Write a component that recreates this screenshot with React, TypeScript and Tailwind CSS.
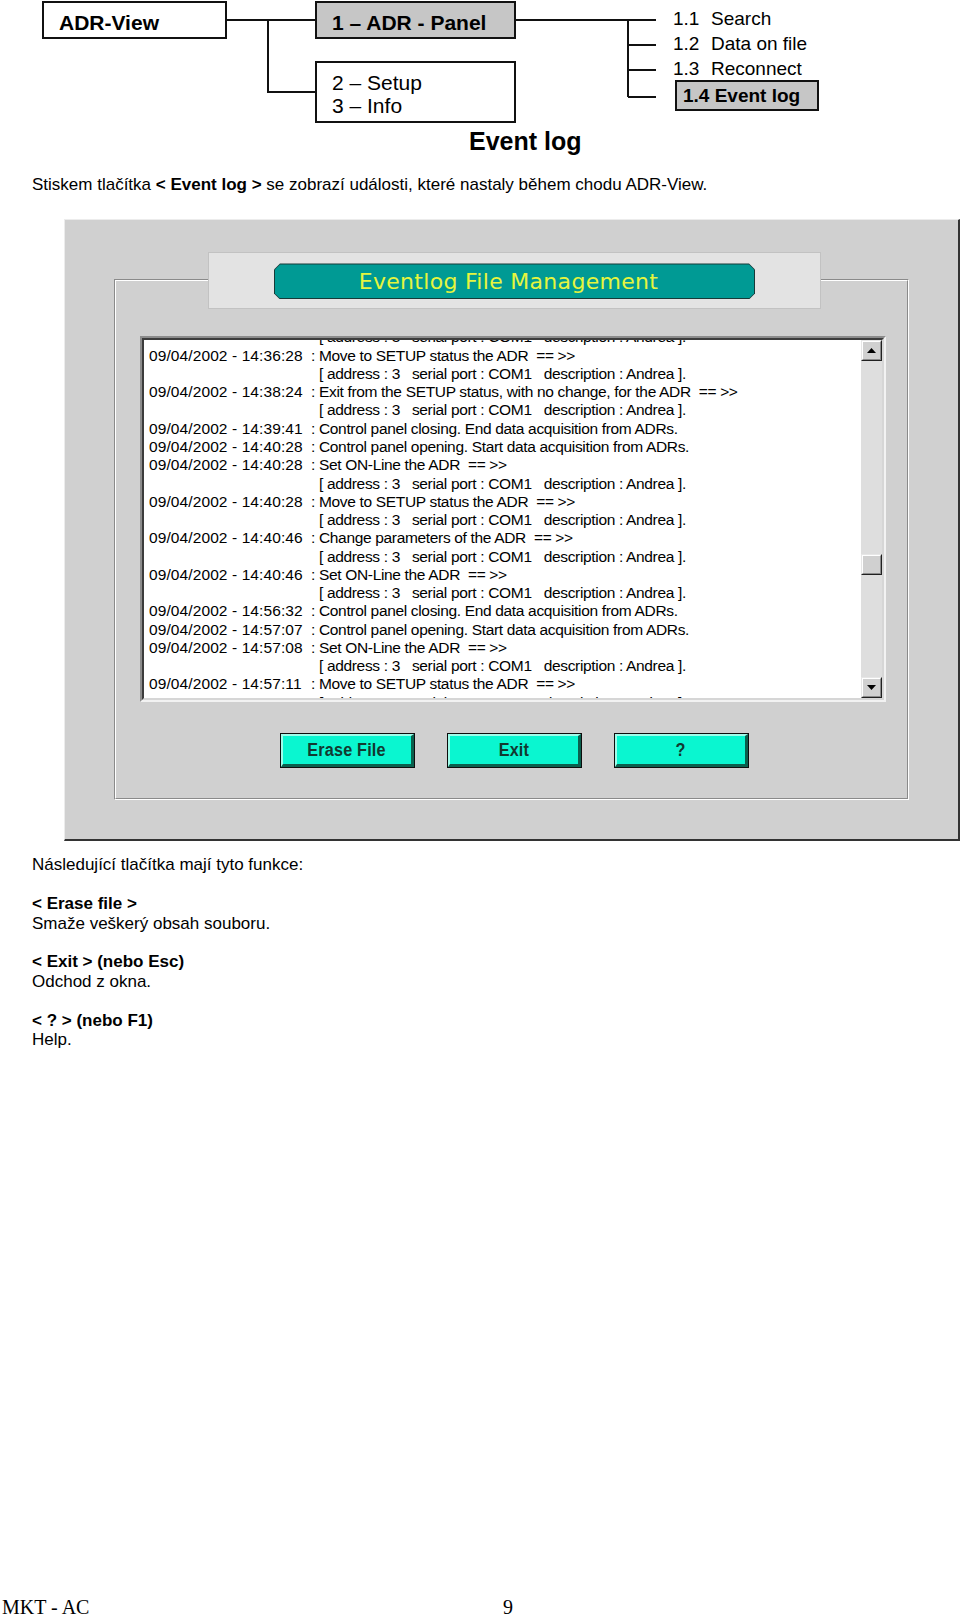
import React from 'react';

const ADDR = '[ address : 3   serial port : COM1   description : Andrea ].';

const rows: [string, string][] = [
  ['', ADDR],
  ['09/04/2002 - 14:36:28', 'Move to SETUP status the ADR  == >>'],
  ['', ADDR],
  ['09/04/2002 - 14:38:24', 'Exit from the SETUP status, with no change, for the ADR  == >>'],
  ['', ADDR],
  ['09/04/2002 - 14:39:41', 'Control panel closing. End data acquisition from ADRs.'],
  ['09/04/2002 - 14:40:28', 'Control panel opening. Start data acquisition from ADRs.'],
  ['09/04/2002 - 14:40:28', 'Set ON-Line the ADR  == >>'],
  ['', ADDR],
  ['09/04/2002 - 14:40:28', 'Move to SETUP status the ADR  == >>'],
  ['', ADDR],
  ['09/04/2002 - 14:40:46', 'Change parameters of the ADR  == >>'],
  ['', ADDR],
  ['09/04/2002 - 14:40:46', 'Set ON-Line the ADR  == >>'],
  ['', ADDR],
  ['09/04/2002 - 14:56:32', 'Control panel closing. End data acquisition from ADRs.'],
  ['09/04/2002 - 14:57:07', 'Control panel opening. Start data acquisition from ADRs.'],
  ['09/04/2002 - 14:57:08', 'Set ON-Line the ADR  == >>'],
  ['', ADDR],
  ['09/04/2002 - 14:57:11', 'Move to SETUP status the ADR  == >>'],
  ['', ADDR],
];

function RaisedBox({ children, className = '' }: { children?: React.ReactNode; className?: string }) {
  return (
    <div className={`border border-t-[#e6e6e6] border-l-[#e6e6e6] border-r-[#202020] border-b-[#202020] bg-[#d0d0d0] ${className}`}>
      <div className="w-full h-full border border-t-white border-l-white border-r-[#8a8a8a] border-b-[#8a8a8a] flex items-center justify-center">
        {children}
      </div>
    </div>
  );
}

function Arrow({ up }: { up: boolean }) {
  return (
    <svg width="9" height="5" viewBox="0 0 9 5">
      {up ? <path d="M4.5 0 L9 5 L0 5 Z" fill="#000" /> : <path d="M0 0 L9 0 L4.5 5 Z" fill="#000" />}
    </svg>
  );
}

function CyanButton({ label, w }: { label: string; w: string }) {
  return (
    <div className={`${w} h-[35px] border border-[#0c0c0c] bg-[#0af6d0]`}>
      <div className="w-full h-full border-t-2 border-l-2 border-t-[#9ffcea] border-l-[#9ffcea] border-b-[3px] border-r-[3px] border-b-[#0b5f4d] border-r-[#0b5f4d] flex items-center justify-center">
        <span className="font-bold text-[18px] leading-none text-[#123a30] scale-x-[0.9] tracking-[0.2px]">{label}</span>
      </div>
    </div>
  );
}

export default function App() {
  return (
    <div className="w-[960px] h-[1616px] bg-white overflow-hidden flex flex-col text-black font-['Liberation_Sans',Arial,sans-serif]">
      {/* Tree diagram */}
      <div className="relative h-[124px] shrink-0">
        <svg className="absolute inset-0" width="960" height="124" viewBox="0 0 960 124">
          <g stroke="#111" strokeWidth="2" fill="none">
            <path d="M227 20 H315" />
            <path d="M268 20 V92 H315" />
            <path d="M516 20 H656" />
            <path d="M628 20 V97" />
            <path d="M628 45 H656" />
            <path d="M628 70 H656" />
            <path d="M628 97 H656" />
          </g>
        </svg>
        <div className="absolute left-[42px] top-[1px] w-[185px] h-[38px] border-2 border-[#111] bg-white pl-[15px] pt-[9px] text-[21px] leading-[21px] font-bold">
          ADR-View
        </div>
        <div className="absolute left-[315px] top-[1px] w-[201px] h-[38px] border-2 border-[#111] bg-[#c6c6c6] pl-[15px] pt-[9px] text-[21px] leading-[21px] font-bold">
          1 – ADR - Panel
        </div>
        <div className="absolute left-[315px] top-[61px] w-[201px] h-[62px] border-2 border-[#111] bg-white pl-[15px] pt-[8px] text-[21px] leading-[23px]">
          <div>2 – Setup</div>
          <div>3 – Info</div>
        </div>
        <div className="absolute left-[673px] top-[6px] text-[19px] leading-[25px]">
          <div className="flex">
            <span className="w-[38px]">1.1</span>
            <span>Search</span>
          </div>
          <div className="flex">
            <span className="w-[38px]">1.2</span>
            <span>Data on file</span>
          </div>
          <div className="flex">
            <span className="w-[38px]">1.3</span>
            <span>Reconnect</span>
          </div>
        </div>
        <div className="absolute left-[675px] top-[80px] w-[144px] h-[31px] border-2 border-[#111] bg-[#c6c6c6] pl-[6px] pt-[4px] text-[19px] leading-[19px] font-bold">
          1.4 Event log
        </div>
      </div>

      {/* Heading */}
      <div className="h-[30px] shrink-0 pt-[2px] pl-[469px] text-[25px] leading-[30px] font-bold">Event log</div>

      {/* Intro */}
      <div className="mt-[21px] shrink-0 pl-[32px] text-[17px] leading-[19.4px]">
        Stiskem tlačítka <b>&lt; Event log &gt;</b> se zobrazí události, které nastaly během chodu ADR-View.
      </div>

      {/* Screenshot window */}
      <div className="mt-[25px] ml-[64px] w-[896px] h-[622px] shrink-0 bg-[#d0d0d0] border-t border-l border-t-[#ececec] border-l-[#ececec] border-r-2 border-b-2 border-r-[#333] border-b-[#333] pt-[32px]">
        <div className="relative z-10 ml-[143px] w-[613px] h-[57px] bg-[#e3e3e3] border border-[#c2c2c2] pt-[10px] pl-[65px]">
          <div className="w-[481px] h-[36px] bg-[#173a38] p-[1px] [clip-path:polygon(6px_0,475px_0,481px_6px,481px_30px,475px_36px,6px_36px,0_30px,0_6px)]">
            <div className="w-full h-full bg-[#009a94] flex items-center justify-center pr-[12px] [clip-path:polygon(5px_0,474px_0,479px_5px,479px_29px,474px_34px,5px_34px,0_29px,0_5px)]">
              <span className="font-['DejaVu_Sans',sans-serif] text-[22px] tracking-[0.3px] leading-none text-[#e6f53e] pt-[1px]">Eventlog File Management</span>
            </div>
          </div>
        </div>

        <div className="ml-[49px] mt-[-30px] w-[795px] h-[521px] border border-t-[#8a8a8a] border-l-[#8a8a8a] border-r-white border-b-white">
          <div className="w-full h-full border border-t-white border-l-white border-r-[#8a8a8a] border-b-[#8a8a8a] pt-[55px] pl-[24px]">
            {/* List box */}
            <div className="w-[746px] h-[366px] border-2 border-t-[#8c8c8c] border-l-[#8c8c8c] border-r-[#f2f2f2] border-b-[#f2f2f2]">
              <div className="w-full h-full border-2 border-t-[#3c3c3c] border-l-[#3c3c3c] border-r-[#d6d6d6] border-b-[#d6d6d6] flex">
                <div className="flex-1 bg-white overflow-hidden pl-[5px]">
                  <div className="mt-[-12px] text-[15.5px] leading-[18.27px] text-black whitespace-pre">
                    {rows.map(([t, m], i) => (
                      <div key={i} className="flex">
                        <span className="w-[162px] shrink-0 tracking-[0.1px]">{t}</span>
                        <span className="tracking-[-0.33px]">{t ? ': ' + m : '  ' + m}</span>
                      </div>
                    ))}
                  </div>
                </div>
                <div className="w-[21px] flex flex-col bg-[#dedede]">
                  <RaisedBox className="h-[21px] w-[21px] shrink-0">
                    <Arrow up />
                  </RaisedBox>
                  <div className="flex-1">
                    <RaisedBox className="mt-[193px] h-[21px] w-[21px]" />
                  </div>
                  <RaisedBox className="h-[21px] w-[21px] shrink-0">
                    <Arrow up={false} />
                  </RaisedBox>
                </div>
              </div>
            </div>

            {/* Buttons */}
            <div className="mt-[31px] ml-[140px] flex">
              <CyanButton label="Erase File" w="w-[135px]" />
              <div className="w-[32px]" />
              <CyanButton label="Exit" w="w-[135px]" />
              <div className="w-[32px]" />
              <CyanButton label="?" w="w-[135px]" />
            </div>
          </div>
        </div>
      </div>

      {/* Description */}
      <div className="mt-[14px] shrink-0 pl-[32px] text-[17px] leading-[19.4px]">
        <div>Následující tlačítka mají tyto funkce:</div>
        <div className="h-[19.4px]" />
        <div className="font-bold">&lt; Erase file &gt;</div>
        <div>Smaže veškerý obsah souboru.</div>
        <div className="h-[19.4px]" />
        <div className="font-bold">&lt; Exit &gt; (nebo Esc)</div>
        <div>Odchod z okna.</div>
        <div className="h-[19.4px]" />
        <div className="font-bold">&lt; ? &gt; (nebo F1)</div>
        <div>Help.</div>
      </div>

      {/* Footer */}
      <div className="mt-auto mb-[1px] h-[17px] shrink-0 flex font-['Liberation_Serif','Times_New_Roman',serif] text-[20px] leading-[18px]">
        <span className="w-[503px] pl-[2px]">MKT - AC</span>
        <span>9</span>
      </div>
    </div>
  );
}
